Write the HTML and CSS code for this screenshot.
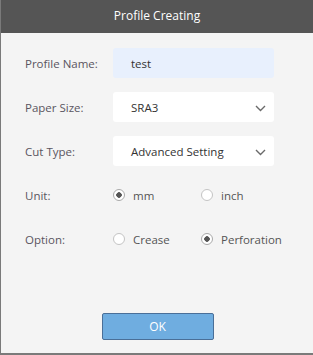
FILE: index.html
```html
<!DOCTYPE html>
<html lang="en">
<head>
  <meta charset="UTF-8" />
  <title>Profile Creating</title>
  <link rel="stylesheet" href="styles.css">
</head>
<body>
  <div class="dialog">
    <div class="dialog-title">Profile Creating</div>
    <div class="dialog-body">
      <div class="row">
        <span class="label">Profile Name:</span>
        <div class="field field-name">test</div>
      </div>
      <div class="row">
        <span class="label">Paper Size:</span>
        <div class="field field-select">
          <span>SRA3</span>
          <svg class="chevron" width="11" height="7" viewBox="0 0 11 7"><path d="M1 1 L5.5 5.5 L10 1" fill="none" stroke="#6a6a6a" stroke-width="1.4"/></svg>
        </div>
      </div>
      <div class="row">
        <span class="label">Cut Type:</span>
        <div class="field field-select">
          <span>Advanced Setting</span>
          <svg class="chevron" width="11" height="7" viewBox="0 0 11 7"><path d="M1 1 L5.5 5.5 L10 1" fill="none" stroke="#6a6a6a" stroke-width="1.4"/></svg>
        </div>
      </div>
      <div class="row">
        <span class="label">Unit:</span>
        <div class="radios">
          <span class="radio checked">mm</span>
          <span class="radio">inch</span>
        </div>
      </div>
      <div class="row">
        <span class="label">Option:</span>
        <div class="radios">
          <span class="radio">Crease</span>
          <span class="radio checked">Perforation</span>
        </div>
      </div>
    </div>
    <div class="dialog-footer">
      <button class="btn-ok">OK</button>
    </div>
  </div>
</body>
</html>
```

FILE: styles.css
```css
body {
  margin: 0;
  font-family: 'Open Sans', 'DejaVu Sans', sans-serif;
}

.dialog {
  width: 313px;
  height: 355px;
  box-sizing: border-box;
  background: #f4f4f4;
  border-left: 1px solid #7a7a7a;
  border-bottom: 2px solid #7a7a7a;
  display: flex;
  flex-direction: column;
}

.dialog-title {
  height: 33px;
  line-height: 32px;
  background: #555555;
  color: #fff;
  text-align: center;
  font-size: 12px;
}

.dialog-body {
  padding: 15px 0 0 24px;
  display: flex;
  flex-direction: column;
  gap: 14px;
}

.row {
  display: grid;
  grid-template-columns: 88px 161px;
  height: 30px;
  align-items: center;
}

.label {
  font-size: 11.5px;
  color: #5a5560;
}

.field {
  height: 30px;
  box-sizing: border-box;
  border-radius: 3px;
  padding: 0 8px 0 18px;
  display: flex;
  align-items: center;
  font-size: 11.5px;
  color: #333;
}

.field-name {
  background: #e8f0fd;
}

.field-select {
  background: #fff;
  justify-content: space-between;
}

.chevron {
  margin-top: 3px;
}

.radios {
  display: grid;
  grid-template-columns: 88px auto;
}

.radio {
  display: flex;
  align-items: center;
  font-size: 11.5px;
  color: #555;
}

.radio::before {
  content: "";
  width: 10px;
  height: 10px;
  border: 1px solid #c4c4c4;
  border-radius: 50%;
  background: #fff;
  margin-right: 8px;
  box-sizing: content-box;
}

.radio.checked::before {
  background: radial-gradient(circle, #555 0 2.5px, #fff 3px);
  border-color: #aaa;
}

.dialog-footer {
  margin-top: auto;
  padding-bottom: 13px;
  display: flex;
  justify-content: center;
}

.btn-ok {
  width: 112px;
  height: 27px;
  margin-left: 1px;
  background: #6fade0;
  border: 1px solid #4a6f98;
  border-radius: 2px;
  color: #fff;
  font-family: inherit;
  font-size: 12px;
}
```
